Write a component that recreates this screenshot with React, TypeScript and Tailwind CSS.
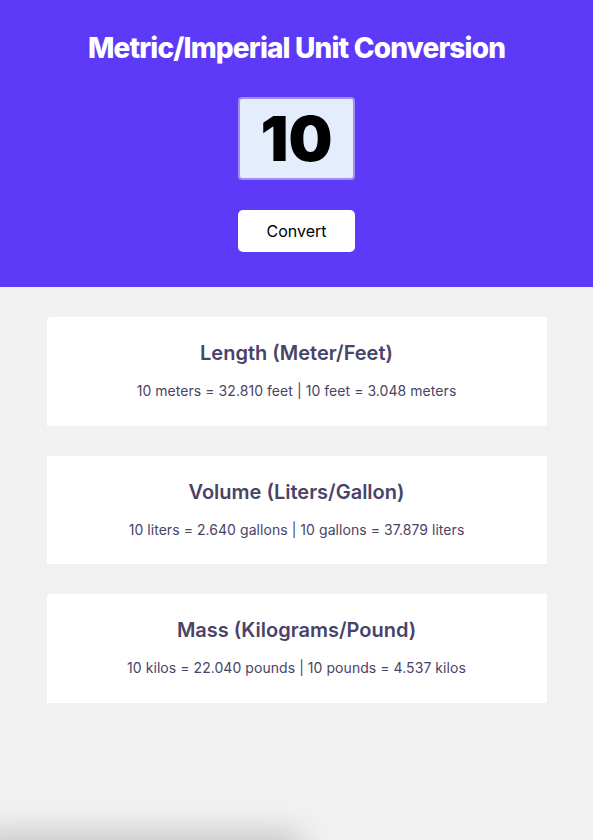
const rows = [
  { title: "Length (Meter/Feet)", text: "10 meters = 32.810 feet | 10 feet = 3.048 meters" },
  { title: "Volume (Liters/Gallon)", text: "10 liters = 2.640 gallons | 10 gallons = 37.879 liters" },
  { title: "Mass (Kilograms/Pound)", text: "10 kilos = 22.040 pounds | 10 pounds = 4.537 kilos" },
];

export default function App() {
  return (
    <div
      className="min-h-[840px] bg-[#f1f1f1] overflow-hidden"
      style={{ fontFamily: "Inter, 'Noto Sans', sans-serif" }}
    >
      <header className="h-[287px] bg-[#5d3af7] flex flex-col items-center pt-[31px]">
        <h1 className="text-[28px] leading-[34px] font-extrabold tracking-[-0.03em] text-white">
          Metric/Imperial Unit Conversion
        </h1>
        <input
          defaultValue="10"
          className="mt-[32px] w-[117px] h-[83px] bg-[#e4edfc] border-2 border-[#a28df6] rounded-[4px] text-center text-[62px] font-black text-black outline-none"
        />
        <button className="mt-[30px] w-[117px] h-[42px] bg-white rounded-[5px] text-[16px] text-black">
          Convert
        </button>
      </header>
      <main className="flex flex-col items-center gap-[30px] pt-[30px]">
        {rows.map((r) => (
          <section
            key={r.title}
            className="w-[500px] h-[108.5px] bg-white rounded-tl-[3px] flex flex-col items-center pt-[22px] text-[#4a4368]"
          >
            <h2 className="text-[20px] leading-[28px] font-semibold">{r.title}</h2>
            <p className="mt-[14px] text-[14px] leading-[20px] tracking-[0.004em]">{r.text}</p>
          </section>
        ))}
      </main>
      <div className="fixed left-[-20px] bottom-[-40px] w-[320px] h-[40px] rounded-full shadow-[0_0_30px_8px_rgba(0,0,0,0.18)]" />
    </div>
  );
}
